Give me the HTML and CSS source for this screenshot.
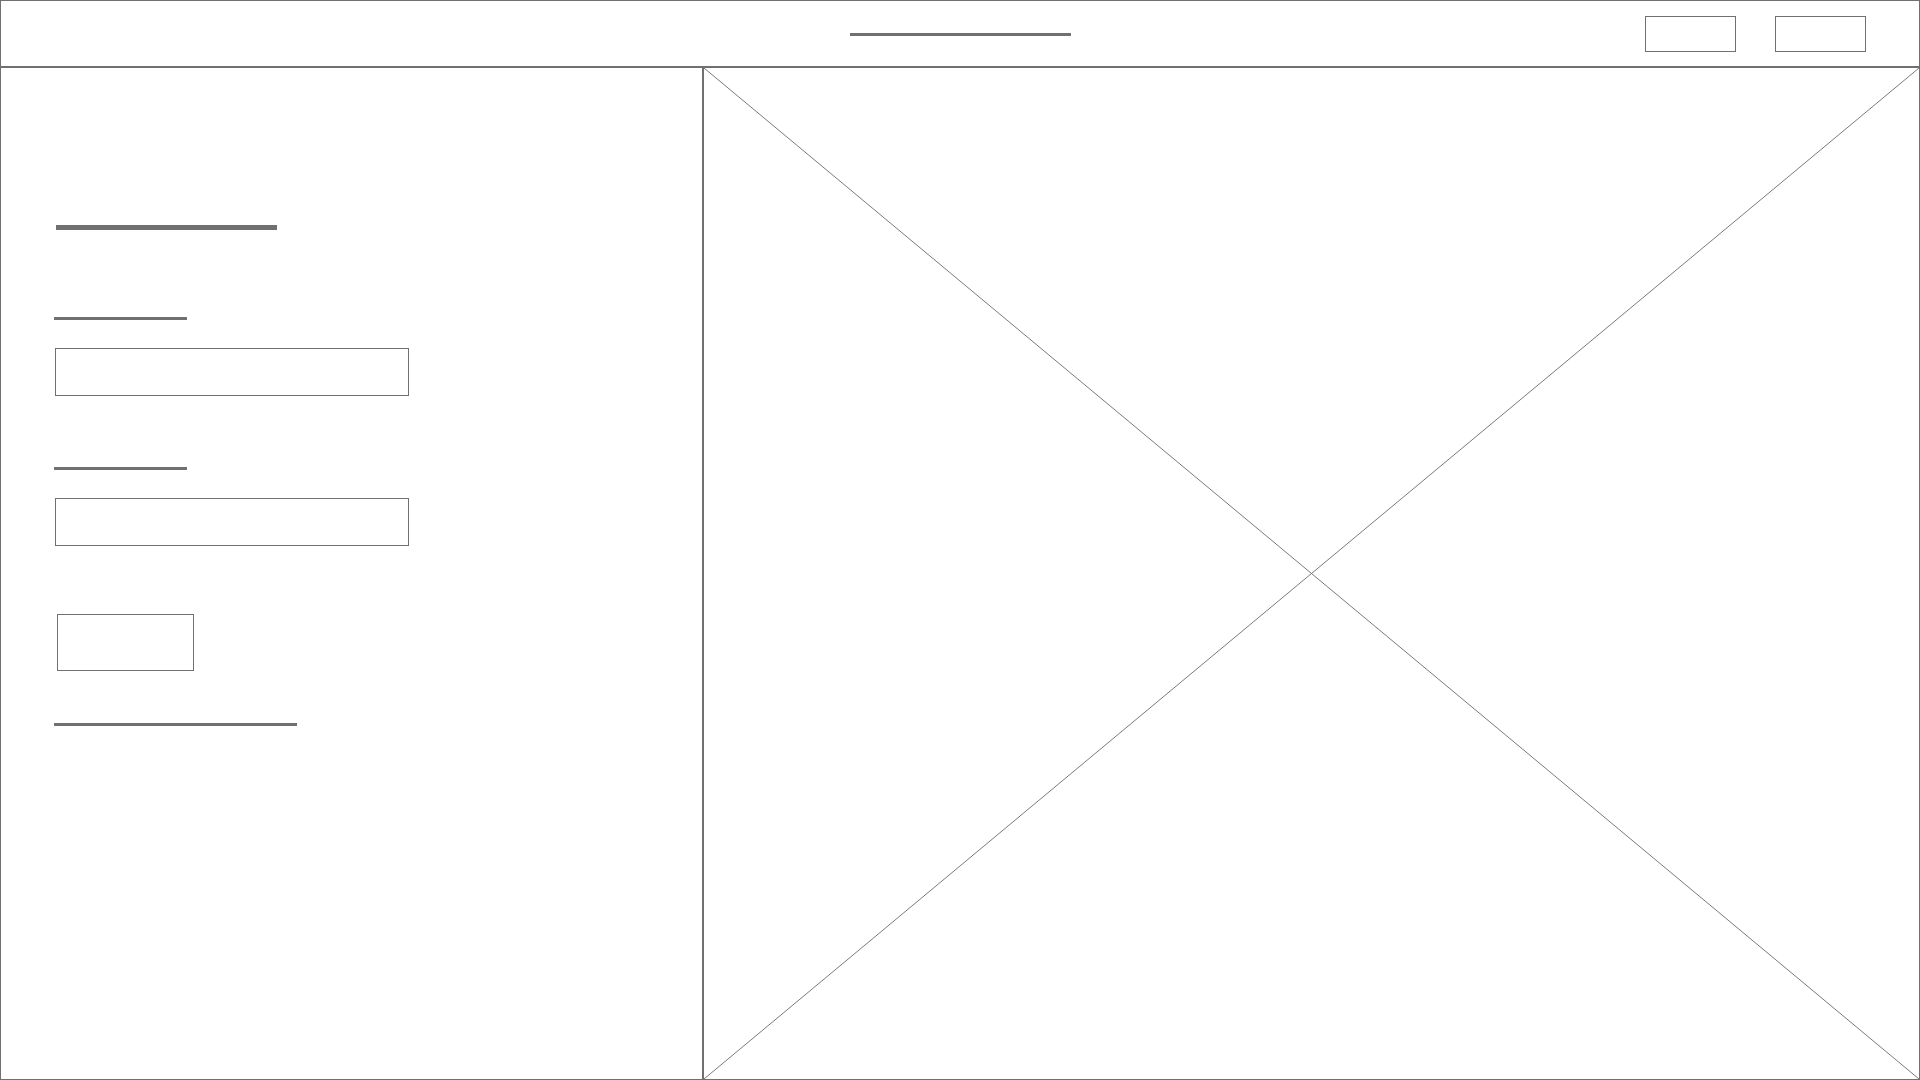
FILE: index.html
```html
<!DOCTYPE html>
<html lang="en">
<head>
<meta charset="utf-8">
<title>Wireframe</title>
<link rel="stylesheet" href="styles.css">
</head>
<body>
<div class="page">
  <header class="topbar">
    <div class="topbar-spacer"></div>
    <div class="title-line"></div>
    <div class="topbar-actions">
      <div class="nav-btn"></div>
      <div class="nav-btn"></div>
    </div>
  </header>
  <main class="main">
    <section class="form-panel">
      <div class="heading-line"></div>
      <div class="label-line label-first"></div>
      <div class="field"></div>
      <div class="label-line label-second"></div>
      <div class="field"></div>
      <div class="submit-btn"></div>
      <div class="link-line"></div>
    </section>
    <section class="image-panel">
      <svg class="placeholder" viewBox="0 0 100 100" preserveAspectRatio="none">
        <line x1="0" y1="0" x2="100" y2="100" />
        <line x1="100" y1="0" x2="0" y2="100" />
      </svg>
    </section>
  </main>
</div>
</body>
</html>
```

FILE: styles.css
```css
* { box-sizing: border-box; }

html, body {
  margin: 0;
  padding: 0;
  background: #ffffff;
  font-family: "Liberation Sans", Arial, sans-serif;
}

.page {
  width: 1920px;
  height: 1080px;
  border: 1px solid #707070;
  display: flex;
  flex-direction: column;
  background: #ffffff;
}

.topbar {
  height: 67px;
  flex: 0 0 67px;
  border-bottom: 2px solid #707070;
  display: grid;
  grid-template-columns: 1fr auto 1fr;
  align-items: center;
}

.title-line {
  width: 221px;
  height: 3px;
  background: #707070;
  margin-top: 1px;
  margin-left: 1px;
}

.topbar-actions {
  display: flex;
  justify-content: flex-end;
  gap: 39px;
  padding-top: 1px;
  padding-right: 53px;
}

.nav-btn {
  width: 91px;
  height: 36px;
  border: 1px solid #707070;
}

.main {
  flex: 1;
  display: flex;
  min-height: 0;
}

.form-panel {
  width: 703px;
  flex: 0 0 703px;
  border-right: 2px solid #707070;
  display: flex;
  flex-direction: column;
  align-items: flex-start;
  padding: 157px 0 0 53px;
}

.heading-line {
  width: 221px;
  height: 5px;
  background: #707070;
  margin-left: 2px;
}

.label-line {
  width: 133px;
  height: 3px;
  background: #707070;
}

.label-first { margin-top: 87px; }
.label-second { margin-top: 71px; }

.field {
  width: 354px;
  height: 48px;
  border: 1px solid #707070;
  margin-top: 28px;
  margin-left: 1px;
}

.submit-btn {
  width: 137px;
  height: 57px;
  border: 1px solid #707070;
  margin-top: 68px;
  margin-left: 3px;
}

.link-line {
  width: 243px;
  height: 3px;
  background: #707070;
  margin-top: 52px;
}

.image-panel {
  flex: 1;
  position: relative;
}

.placeholder {
  display: block;
  width: 100%;
  height: 100%;
}

.placeholder line {
  stroke: #7a7a7a;
  stroke-width: 1px;
  vector-effect: non-scaling-stroke;
}
```
